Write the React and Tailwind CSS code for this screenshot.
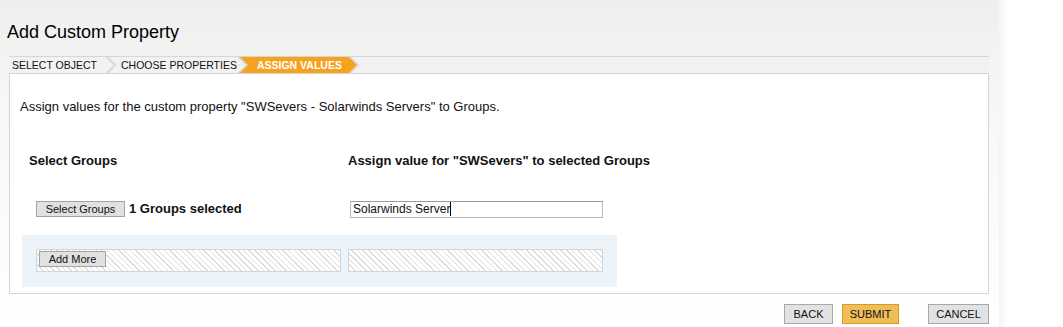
export default function App() {
  const hatch =
    'bg-[repeating-linear-gradient(45deg,#dcdcdc_0px,#dcdcdc_1px,#ffffff_1px,#ffffff_4px)]'

  return (
    <div className="flex w-[1063px] h-[327px] bg-white font-['Liberation_Sans',Arial,sans-serif] text-[#111] overflow-hidden">
      <div className="w-[999px] h-full bg-gradient-to-b from-[#eeeeee] via-[#f7f7f5] via-30% to-white">
        {/* Title */}
        <h1 className="pt-[21px] pl-[7px] text-[18px] leading-[22px] font-normal text-black">
          Add Custom Property
        </h1>

        {/* Wizard steps */}
        <div className="ml-[9px] mt-[13px] w-[980px] h-[17px] border-t border-[#d6d6d6] bg-[#f2f2f2] flex items-stretch text-[10.5px] leading-[16px] uppercase">
          <span className="pl-[3px] pr-[9px]">Select Object</span>
          <svg width="11" height="16" viewBox="0 0 11 16" className="shrink-0">
            <polyline points="1,0 9,8 1,16" fill="none" stroke="#cfcfcf" strokeWidth="2" />
            <polyline points="1,0 9,8 1,16" fill="none" stroke="#f7f7f7" strokeWidth="0.6" />
          </svg>
          <span className="pl-[4px] pr-[1px]">Choose Properties</span>
          <svg width="11" height="16" viewBox="0 0 11 16" className="shrink-0">
            <rect x="0" y="0" width="11" height="16" fill="#f7a21f" />
            <polygon points="0,0 9,8 0,16" fill="#f2f2f2" />
            <polyline points="1,0 9,8 1,16" fill="none" stroke="#d2d2d2" strokeWidth="1.6" />
          </svg>
          <span className="bg-[#f7a21f] text-white font-bold pl-[8px] pr-[7px]">
            Assign Values
          </span>
          <svg width="11" height="16" viewBox="0 0 11 16" className="shrink-0">
            <polygon points="0,0 8,8 0,16" fill="#f7a21f" />
            <polyline points="1,0 9,8 1,16" fill="none" stroke="#d2d2d2" strokeWidth="1.4" />
          </svg>
        </div>

        {/* Content box */}
        <div className="ml-[9px] w-[980px] h-[221px] border border-[#d4d4d4] bg-white">
          <p className="pt-[25px] pl-[10px] text-[13px] leading-[15px]">
            Assign values for the custom property "SWSevers - Solarwinds Servers" to Groups.
          </p>

          <div className="mt-[39px] flex text-[13px] leading-[15px] font-bold">
            <div className="pl-[19px] w-[338px]">Select Groups</div>
            <div>Assign value for "SWSevers" to selected Groups</div>
          </div>

          <div className="mt-[33px] flex items-center h-[16px]">
            <div className="pl-[26px] w-[340px] flex items-center">
              <button className="w-[89px] h-[16px] bg-[#e1e1e1] border border-[#a4a4a4] text-[11px] leading-[14px] text-[#111]">
                Select Groups
              </button>
              <span className="ml-[4px] text-[13px] font-bold leading-[16px]">1 Groups selected</span>
            </div>
            <div className="w-[253px] h-[17px] border border-[#b8b8b8] border-t-[#9a9a9a] bg-white flex items-center pl-[2px] text-[12px] leading-[14px]">
              Solarwinds Server
              <span className="w-px h-[14px] bg-black" />
            </div>
          </div>

          <div className="mt-[18px] ml-[12px] w-[595px] h-[52px] bg-[#ecf4fa] pt-[14px] pl-[14px] flex gap-[7px]">
            <div className={`w-[305px] h-[23px] border border-[#cdd5dd] ${hatch} pl-[2px] pt-[1px] flex items-start`}>
              <button className="w-[67px] h-[16px] bg-[#e1e1e1] border border-[#a4a4a4] text-[11px] leading-[14px] text-[#111]">
                Add More
              </button>
            </div>
            <div className={`w-[255px] h-[23px] border border-[#cdd5dd] ${hatch}`} />
          </div>
        </div>

        {/* Footer buttons */}
        <div className="w-[989px] mt-[10px] flex justify-end text-[11px]">
          <button className="w-[49px] h-[20px] bg-[#e2e2e2] border border-[#a8a8a8] leading-[18px] uppercase">Back</button>
          <button className="ml-[9px] w-[57px] h-[20px] bg-[#f1bd58] border border-[#d99a25] leading-[18px] uppercase">Submit</button>
          <button className="ml-[29px] w-[61px] h-[20px] bg-[#e2e2e2] border border-[#a8a8a8] leading-[18px] uppercase">Cancel</button>
        </div>
      </div>
      <div className="w-[9px] h-full bg-gradient-to-r from-[#f4f4f2] to-white" />
    </div>
  )
}
